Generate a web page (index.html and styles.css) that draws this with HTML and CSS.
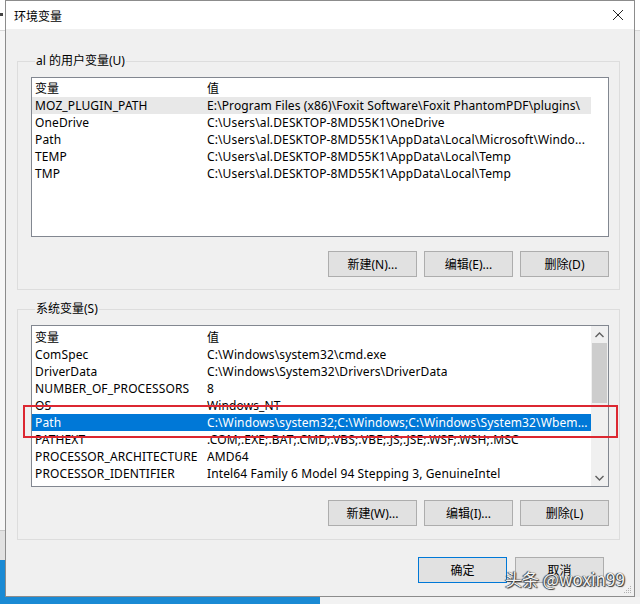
FILE: index.html
```html
<!DOCTYPE html>
<html lang="zh-CN">
<head>
<meta charset="utf-8">
<title>环境变量</title>
<link rel="stylesheet" href="styles.css">
</head>
<body>
<div class="desktop">
  <div class="bg-left">
    <div class="bl-top"><span class="bl-icon"></span></div>
    <div class="bl-mid"></div>
    <div class="bl-low"></div>
    <div class="bl-blue"></div>
  </div>
  <div class="bg-right">
    <div class="br-top"></div>
    <div class="br-mid"></div>
  </div>
  <div class="bg-bottom"><div class="bb-blue"></div><div class="bb-light"></div></div>

  <div class="dialog">
    <div class="titlebar">
      <span class="title">环境变量</span>
      <svg class="close" width="12" height="12" viewBox="0 0 12 12"><path d="M1 1 L11 11 M11 1 L1 11" stroke="#222" stroke-width="1" fill="none"/></svg>
    </div>
    <div class="body">
      <fieldset class="group">
        <legend>al 的用户变量(U)</legend>
        <div class="listbox lb-user">
          <div class="rows">
            <div class="row"><span class="c1">变量</span><span class="c2">值</span></div>
            <div class="row hover"><span class="c1">MOZ_PLUGIN_PATH</span><span class="c2">E:\Program Files (x86)\Foxit Software\Foxit PhantomPDF\plugins\</span></div>
            <div class="row"><span class="c1">OneDrive</span><span class="c2">C:\Users\al.DESKTOP-8MD55K1\OneDrive</span></div>
            <div class="row"><span class="c1">Path</span><span class="c2">C:\Users\al.DESKTOP-8MD55K1\AppData\Local\Microsoft\Windo...</span></div>
            <div class="row"><span class="c1">TEMP</span><span class="c2">C:\Users\al.DESKTOP-8MD55K1\AppData\Local\Temp</span></div>
            <div class="row"><span class="c1">TMP</span><span class="c2">C:\Users\al.DESKTOP-8MD55K1\AppData\Local\Temp</span></div>
          </div>
        </div>
        <div class="btnrow">
          <button class="btn">新建(N)...</button>
          <button class="btn">编辑(E)...</button>
          <button class="btn">删除(D)</button>
        </div>
      </fieldset>

      <fieldset class="group group-sys">
        <legend>系统变量(S)</legend>
        <div class="listbox lb-sys">
          <div class="rows">
            <div class="row"><span class="c1">变量</span><span class="c2">值</span></div>
            <div class="row"><span class="c1">ComSpec</span><span class="c2">C:\Windows\system32\cmd.exe</span></div>
            <div class="row"><span class="c1">DriverData</span><span class="c2">C:\Windows\System32\Drivers\DriverData</span></div>
            <div class="row"><span class="c1">NUMBER_OF_PROCESSORS</span><span class="c2">8</span></div>
            <div class="row"><span class="c1">OS</span><span class="c2">Windows_NT</span></div>
            <div class="row selected"><span class="c1">Path</span><span class="c2">C:\Windows\system32;C:\Windows;C:\Windows\System32\Wbem...</span></div>
            <div class="row"><span class="c1">PATHEXT</span><span class="c2">.COM;.EXE;.BAT;.CMD;.VBS;.VBE;.JS;.JSE;.WSF;.WSH;.MSC</span></div>
            <div class="row"><span class="c1">PROCESSOR_ARCHITECTURE</span><span class="c2">AMD64</span></div>
            <div class="row"><span class="c1">PROCESSOR_IDENTIFIER</span><span class="c2">Intel64 Family 6 Model 94 Stepping 3, GenuineIntel</span></div>
          </div>
          <div class="scrollbar">
            <div class="sb-arrow"><svg width="9" height="6" viewBox="0 0 9 6"><path d="M0.5 5 L4.5 1 L8.5 5" stroke="#606060" stroke-width="1.4" fill="none"/></svg></div>
            <div class="sb-thumb"></div>
            <div class="sb-track"></div>
            <div class="sb-arrow"><svg width="9" height="6" viewBox="0 0 9 6"><path d="M0.5 1 L4.5 5 L8.5 1" stroke="#606060" stroke-width="1.4" fill="none"/></svg></div>
          </div>
        </div>
        <div class="btnrow">
          <button class="btn">新建(W)...</button>
          <button class="btn">编辑(I)...</button>
          <button class="btn">删除(L)</button>
        </div>
      </fieldset>

      <div class="footer">
        <button class="btn btn-default">确定</button>
        <button class="btn">取消</button>
      </div>
    </div>
    <svg class="grip" width="8" height="8" viewBox="0 0 8 8"><g fill="#b0b0b0"><rect x="6" y="0" width="1" height="1"/><rect x="4" y="2" width="1" height="1"/><rect x="6" y="2" width="1" height="1"/><rect x="2" y="4" width="1" height="1"/><rect x="4" y="4" width="1" height="1"/><rect x="6" y="4" width="1" height="1"/><rect x="0" y="6" width="1" height="1"/><rect x="2" y="6" width="1" height="1"/><rect x="4" y="6" width="1" height="1"/><rect x="6" y="6" width="1" height="1"/></g></svg>
  </div>

  <div class="redbox"></div>
  <div class="watermark">头条 @woxin99</div>
</div>
</body>
</html>
```
FILE: styles.css
```css
* { box-sizing: border-box; }
html, body { margin: 0; padding: 0; }
body {
  width: 640px;
  height: 604px;
  overflow: hidden;
  background: #f0f0f0;
  font-family: "Noto Sans", "Noto Sans CJK SC", sans-serif;
  font-size: 12px;
  color: #000;
}
.desktop {
  position: relative;
  width: 640px;
  height: 604px;
  overflow: hidden;
}

/* background windows */
.bg-left {
  position: absolute;
  left: 0; top: 0;
  width: 6px; height: 604px;
  display: flex;
  flex-direction: column;
}
.bl-top { height: 30px; background: #fff; position: relative; }
.bl-icon { display: block; width: 3px; height: 3px; background: #444; margin-top: 13px; }
.bl-mid { height: 500px; background: #f7f7f7; border-top: 1px solid #d8d8d8; }
.bl-low { height: 30px; background: #e2e2e2; border-top: 1px solid #c8c8c8; }
.bl-blue { flex: 1; background: #1a8ad4; }
.bg-right {
  position: absolute;
  right: 0; top: 0;
  width: 6px; height: 604px;
  display: flex;
  flex-direction: column;
}
.br-top { height: 30px; background: #fff; }
.br-mid { flex: 1; background: #ececec; border-top: 1px solid #d8d8d8; }
.bg-bottom {
  position: absolute;
  left: 0; bottom: 0;
  width: 640px; height: 7px;
  display: flex;
}
.bb-blue { width: 320px; background: #1a8ad4; }
.bb-light { flex: 1; background: #f2f2f2; }

/* dialog */
.dialog {
  position: absolute;
  left: 5px; top: 0;
  width: 630px; height: 597px;
  border: 1px solid #8c8c8c;
  background: #f0f0f0;
  display: flex;
  flex-direction: column;
}
.titlebar {
  height: 28px;
  background: #fff;
  display: flex;
  align-items: center;
  justify-content: space-between;
  padding: 0 10px 0 8px;
  flex-shrink: 0;
}
.title {
  font-family: "Noto Sans CJK SC", sans-serif;
  font-size: 12px;
}
.close { display: block; }
.body {
  padding: 0 14px 0 11px;
  display: flex;
  flex-direction: column;
}
.group {
  margin: 24px 0 0 0;
  border: 1px solid #dddddd;
  padding: 8px 10px 12px 13px;
  min-width: 0;
}
.group-sys { margin-top: 11px; padding-bottom: 13px; }
.group legend {
  padding: 0 1px;
  margin-left: 4px;
  font-family: "Noto Sans", "Noto Sans CJK SC", sans-serif;
  line-height: 16px;
}
.listbox {
  background: #fff;
  border: 1px solid #828790;
  display: flex;
  justify-content: space-between;
}
.lb-user { height: 160px; }
.lb-sys { height: 162px; }
.rows {
  width: 559px;
  padding-top: 2px;
  display: flex;
  flex-direction: column;
  letter-spacing: 0.12px;
}
.lb-sys .rows { padding-top: 3px; }
.row {
  height: 17px;
  line-height: 17px;
  display: flex;
  white-space: nowrap;
  overflow: hidden;
  flex-shrink: 0;
}
.row .c1 { width: 175px; padding-left: 3px; flex-shrink: 0; }
.row .c2 { flex: 1; padding-left: 0; overflow: hidden; }
.row.hover { background: #e8e8e8; }
.row.selected { background: #0078d7; color: #fff; }

.scrollbar {
  width: 17px;
  display: flex;
  flex-direction: column;
  background: #f0f0f0;
}
.sb-arrow {
  height: 17px;
  display: flex;
  align-items: center;
  justify-content: center;
}
.sb-thumb { height: 60px; background: #cdcdcd; margin: 0 1px; }
.sb-track { flex: 1; }

.btnrow {
  display: flex;
  justify-content: flex-end;
  gap: 7px;
  margin-top: 14px;
}
.group-sys .btnrow { margin-top: 13px; }
.btn {
  width: 89px;
  height: 26px;
  background: #e1e1e1;
  border: 1px solid #adadad;
  font-family: "Noto Sans", "Noto Sans CJK SC", sans-serif;
  font-size: 12px;
  color: #000;
  padding: 0;
  margin: 0;
}
.btn-default { border-color: #0078d7; }
.footer {
  display: flex;
  justify-content: flex-end;
  gap: 8px;
  margin-top: 17px;
  padding-right: 16px;
}
.footer .btn { height: 26px; }
.grip {
  position: absolute;
  right: 2px; bottom: 2px;
}

/* overlays */
.redbox {
  position: absolute;
  left: 23px; top: 405px;
  width: 595px; height: 33px;
  border: 2px solid #dc2731;
}
.watermark {
  position: absolute;
  left: 505px; top: 567px;
  font-family: "Noto Sans CJK SC", sans-serif;
  font-size: 17px;
  line-height: 24px;
  color: #f4f4f4;
  text-shadow: 0 0 1px #222, 1px 1px 1px #333, -1px 0 1px #333;
  white-space: nowrap;
}
```
